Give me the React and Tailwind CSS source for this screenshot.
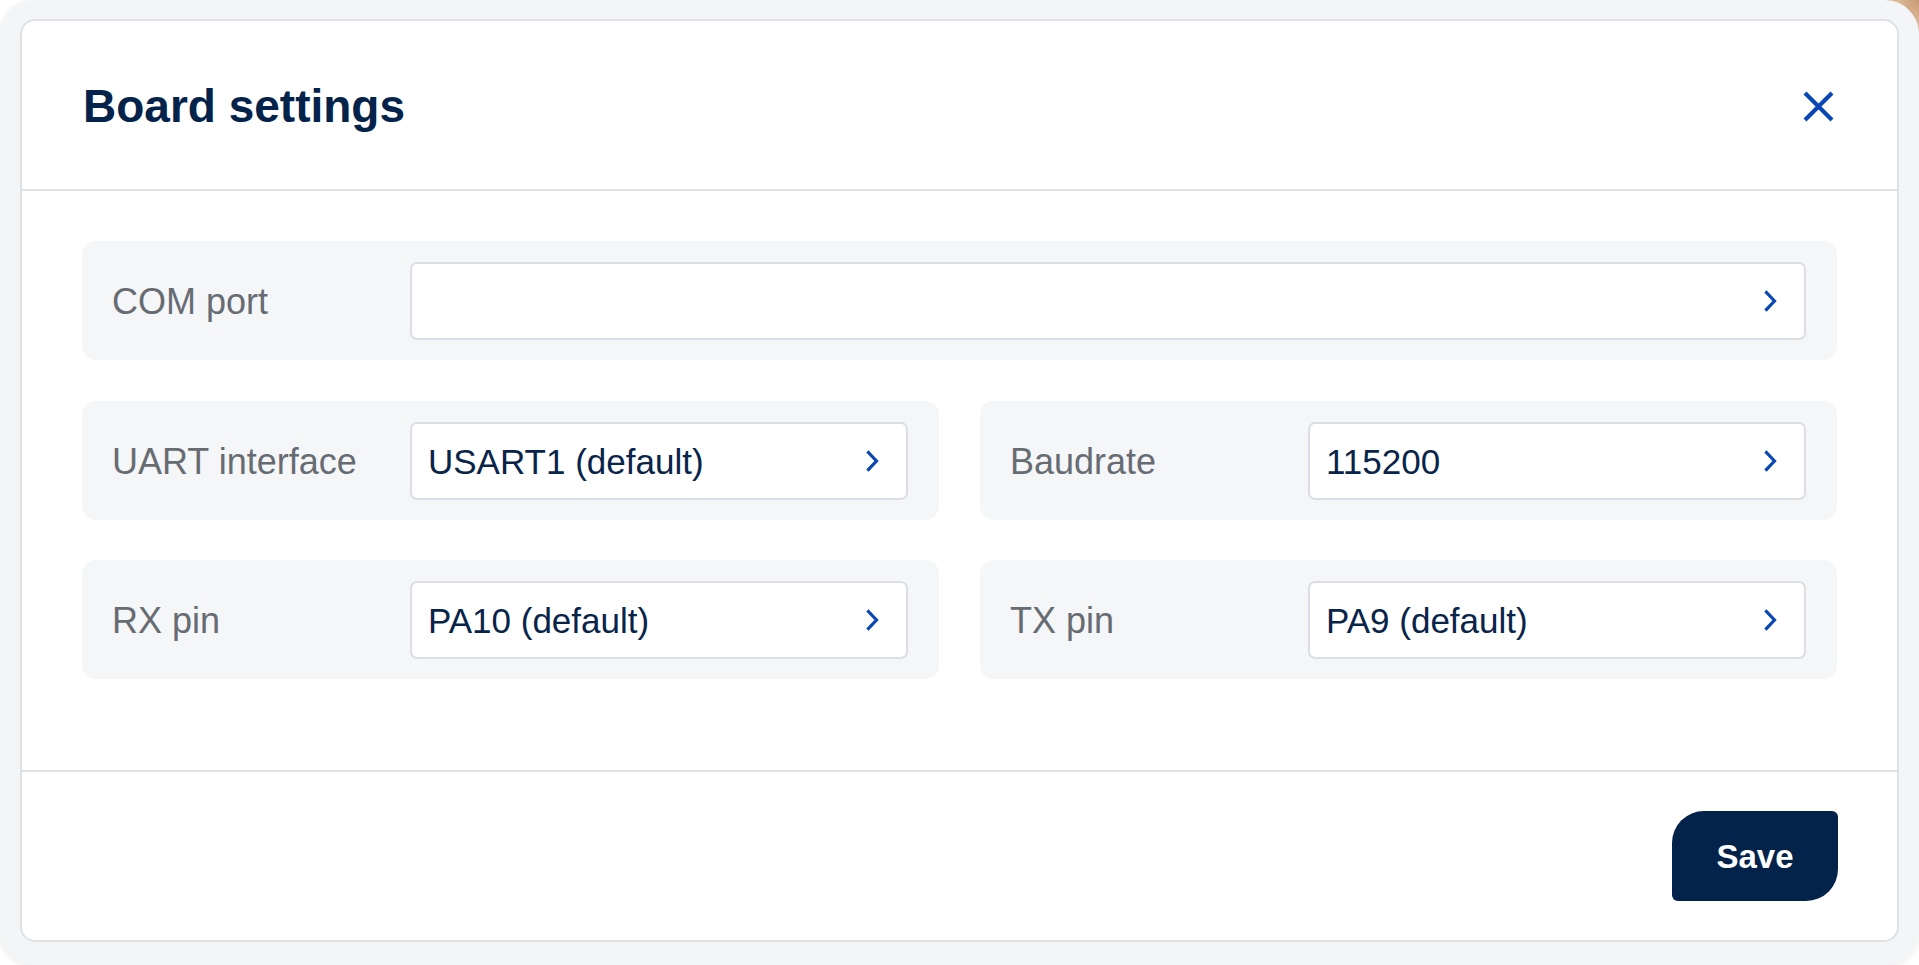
import React from 'react';

const font = { fontFamily: '"Liberation Sans", Arial, sans-serif' };

const Chevron = () => (
  <svg width="14" height="22" viewBox="0 0 14 22" fill="none" className="shrink-0">
    <path d="M2.5 2.5 L10.5 11 L2.5 19.5" stroke="#0a47b4" strokeWidth="3.2" strokeLinecap="square" />
  </svg>
);

const SelectField = ({ label, value }) => (
  <div className="flex items-center h-[119px] rounded-[14px] bg-[#f5f6f8] pl-[30px] pr-[31px]">
    <span className="w-[298px] shrink-0 text-[36px] leading-none pt-[2px] text-[#676c73]">{label}</span>
    <button className="flex-1 h-[78px] flex items-center justify-between bg-white border-2 border-[#dcdee3] rounded-[7px] pl-4 pr-[26px] text-left">
      <span className="text-[35px] leading-none pt-[2px] text-[#082449]">{value}</span>
      <Chevron />
    </button>
  </div>
);

export default function App() {
  return (
    <div
      className="w-full h-[965px] bg-[radial-gradient(circle_at_100%_0%,#c89a72_0px,#e6c7aa_30px,#ffffff_70px)]"
      style={font}
    >
      <div className="h-full rounded-[34px] bg-[#f4f5f7] pt-[19px] px-[20px] pb-[23px] shadow-[0_2px_6px_rgba(0,0,0,0.08)]">
        <div className="h-full flex flex-col bg-white border-2 border-[#dfe1e5] rounded-[15px]">
          {/* header */}
          <div className="h-[170px] shrink-0 flex items-center justify-between pl-[61px] pr-[62px] border-b-2 border-[#dfe1e5]">
            <h2 className="text-[46px] font-bold leading-none pt-[2px] text-[#03234b]">Board settings</h2>
            <button aria-label="Close" className="pt-[2px]">
              <svg width="33" height="33" viewBox="0 0 33 33" fill="none">
                <path d="M3 3 L30 30 M30 3 L3 30" stroke="#0a47b4" strokeWidth="4.2" />
              </svg>
            </button>
          </div>

          {/* body */}
          <div className="flex-1 pt-[50px] px-[60px]">
            <SelectField label="COM port" value="" />
            <div className="grid grid-cols-2 gap-x-[41px] gap-y-[40px] mt-[41px]">
              <SelectField label="UART interface" value="USART1 (default)" />
              <SelectField label="Baudrate" value="115200" />
              <SelectField label="RX pin" value="PA10 (default)" />
              <SelectField label="TX pin" value="PA9 (default)" />
            </div>
          </div>

          {/* footer */}
          <div className="h-[170px] shrink-0 flex items-center justify-end pr-[59px] border-t-2 border-[#dfe1e5]">
            <button className="w-[166px] h-[90px] pt-[2px] bg-[#04234a] text-white text-[33px] font-bold rounded-tl-[32px] rounded-br-[32px] rounded-tr-[6px] rounded-bl-[6px]">
              Save
            </button>
          </div>
        </div>
      </div>
    </div>
  );
}
